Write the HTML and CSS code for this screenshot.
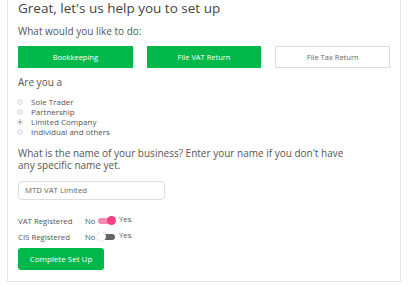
FILE: index.html
```html
<!DOCTYPE html>
<html lang="en">
<head>
    <meta charset="UTF-8">
    <title>setup</title>
    <link rel="stylesheet" href="styles.css">
</head>
<body>
    <div class="card">
        <h2 class="title">Great, let's us help you to set up</h2>
        <p class="label">What would you like to do:</p>
        <div class="choices">
            <div class="btn on">Bookkeeping</div>
            <div class="btn on">File VAT Return</div>
            <div class="btn">File Tax Return</div>
        </div>
        <p class="label">Are you a</p>
        <ul class="radios">
            <li><span class="dot"></span>Sole Trader</li>
            <li><span class="dot"></span>Partnership</li>
            <li><span class="dot checked"></span>Limited Company</li>
            <li><span class="dot"></span>Individual and others</li>
        </ul>
        <p class="question">What is the name of your business? Enter your name if you don't have any specific name yet.</p>
        <div class="input">MTD VAT Limited</div>
        <div class="switches">
            <div class="row">
                <span class="name">VAT Registered</span>
                <span class="no">No</span>
                <span class="toggle yes"><span class="knob"></span></span>
                <span class="yes-text">Yes</span>
            </div>
            <div class="row">
                <span class="name">CIS Registered</span>
                <span class="no">No</span>
                <span class="toggle"><span class="knob"></span></span>
                <span class="yes-text">Yes</span>
            </div>
        </div>
        <div class="submit">Complete Set Up</div>
    </div>
</body>
</html>
```

FILE: styles.css
```css
*{
    margin: 0;
    padding: 0;
    box-sizing: border-box;
}
body{
    background: #fff;
    font-family: "Open Sans", sans-serif;
    color: #555;
}
.card{
    margin: -20px 0 0 7px;
    width: 394px;
    height: 302px;
    border: 1px solid #e6e6e6;
    padding: 20px 10px 0 10px;
}
.title{
    font-weight: normal;
    font-size: 13.5px;
    line-height: 14px;
    color: #444;
}
.label{
    font-size: 10px;
    line-height: 14px;
    margin-top: 9px;
}
.choices{
    display: flex;
    gap: 14px;
    margin-top: 8px;
}
.btn{
    width: 115px;
    height: 22px;
    line-height: 20px;
    text-align: center;
    font-size: 7.5px;
    border: 1px solid #ddd;
    color: #666;
}
.btn.on{
    background: #00b94a;
    border-color: #00b94a;
    color: #fff;
}
.choices + .label{
    margin-top: 7px;
}
.radios{
    list-style: none;
    margin-top: 8px;
}
.radios li{
    display: flex;
    align-items: center;
    font-size: 8px;
    line-height: 10px;
    height: 10px;
}
.dot{
    width: 6px;
    height: 6px;
    border-radius: 50%;
    border: 1px solid #ddd;
    background: #f3f3f3;
    margin: 0 8px 0 -1px;
    position: relative;
}
.dot.checked::after{
    content: "";
    position: absolute;
    left: 1px;
    top: 1px;
    width: 2px;
    height: 2px;
    border-radius: 50%;
    background: #777;
}
.question{
    font-size: 10px;
    line-height: 12px;
    margin-top: 10px;
    padding-right: 35px;
}
.input{
    width: 147px;
    height: 19px;
    margin-top: 10px;
    border: 1px solid #ddd;
    border-radius: 4px;
    font-size: 7.8px;
    line-height: 17px;
    padding-left: 6px;
    color: #666;
}
.switches{
    margin-top: 13px;
}
.row{
    display: flex;
    align-items: center;
    height: 16px;
    font-size: 7.8px;
}
.name{
    width: 67px;
}
.no{
    width: 13px;
}
.toggle{
    width: 17px;
    height: 6px;
    border-radius: 3px;
    background: #666;
    position: relative;
    margin-right: 4px;
}
.toggle .knob{
    position: absolute;
    top: -2px;
    left: -1px;
    width: 9px;
    height: 9px;
    border-radius: 50%;
    background: #fff;
    box-shadow: 0 0 1px rgba(0,0,0,.4);
}
.toggle.yes{
    background: #f788b0;
}
.toggle.yes .knob{
    left: 9px;
    background: #f73f83;
    box-shadow: none;
}
.yes-text{
    position: relative;
    top: -2px;
}
.submit{
    width: 86px;
    height: 22px;
    margin-top: 3px;
    background: #00b94a;
    color: #fff;
    border-radius: 3px;
    font-size: 8px;
    line-height: 22px;
    text-align: center;
}
```
